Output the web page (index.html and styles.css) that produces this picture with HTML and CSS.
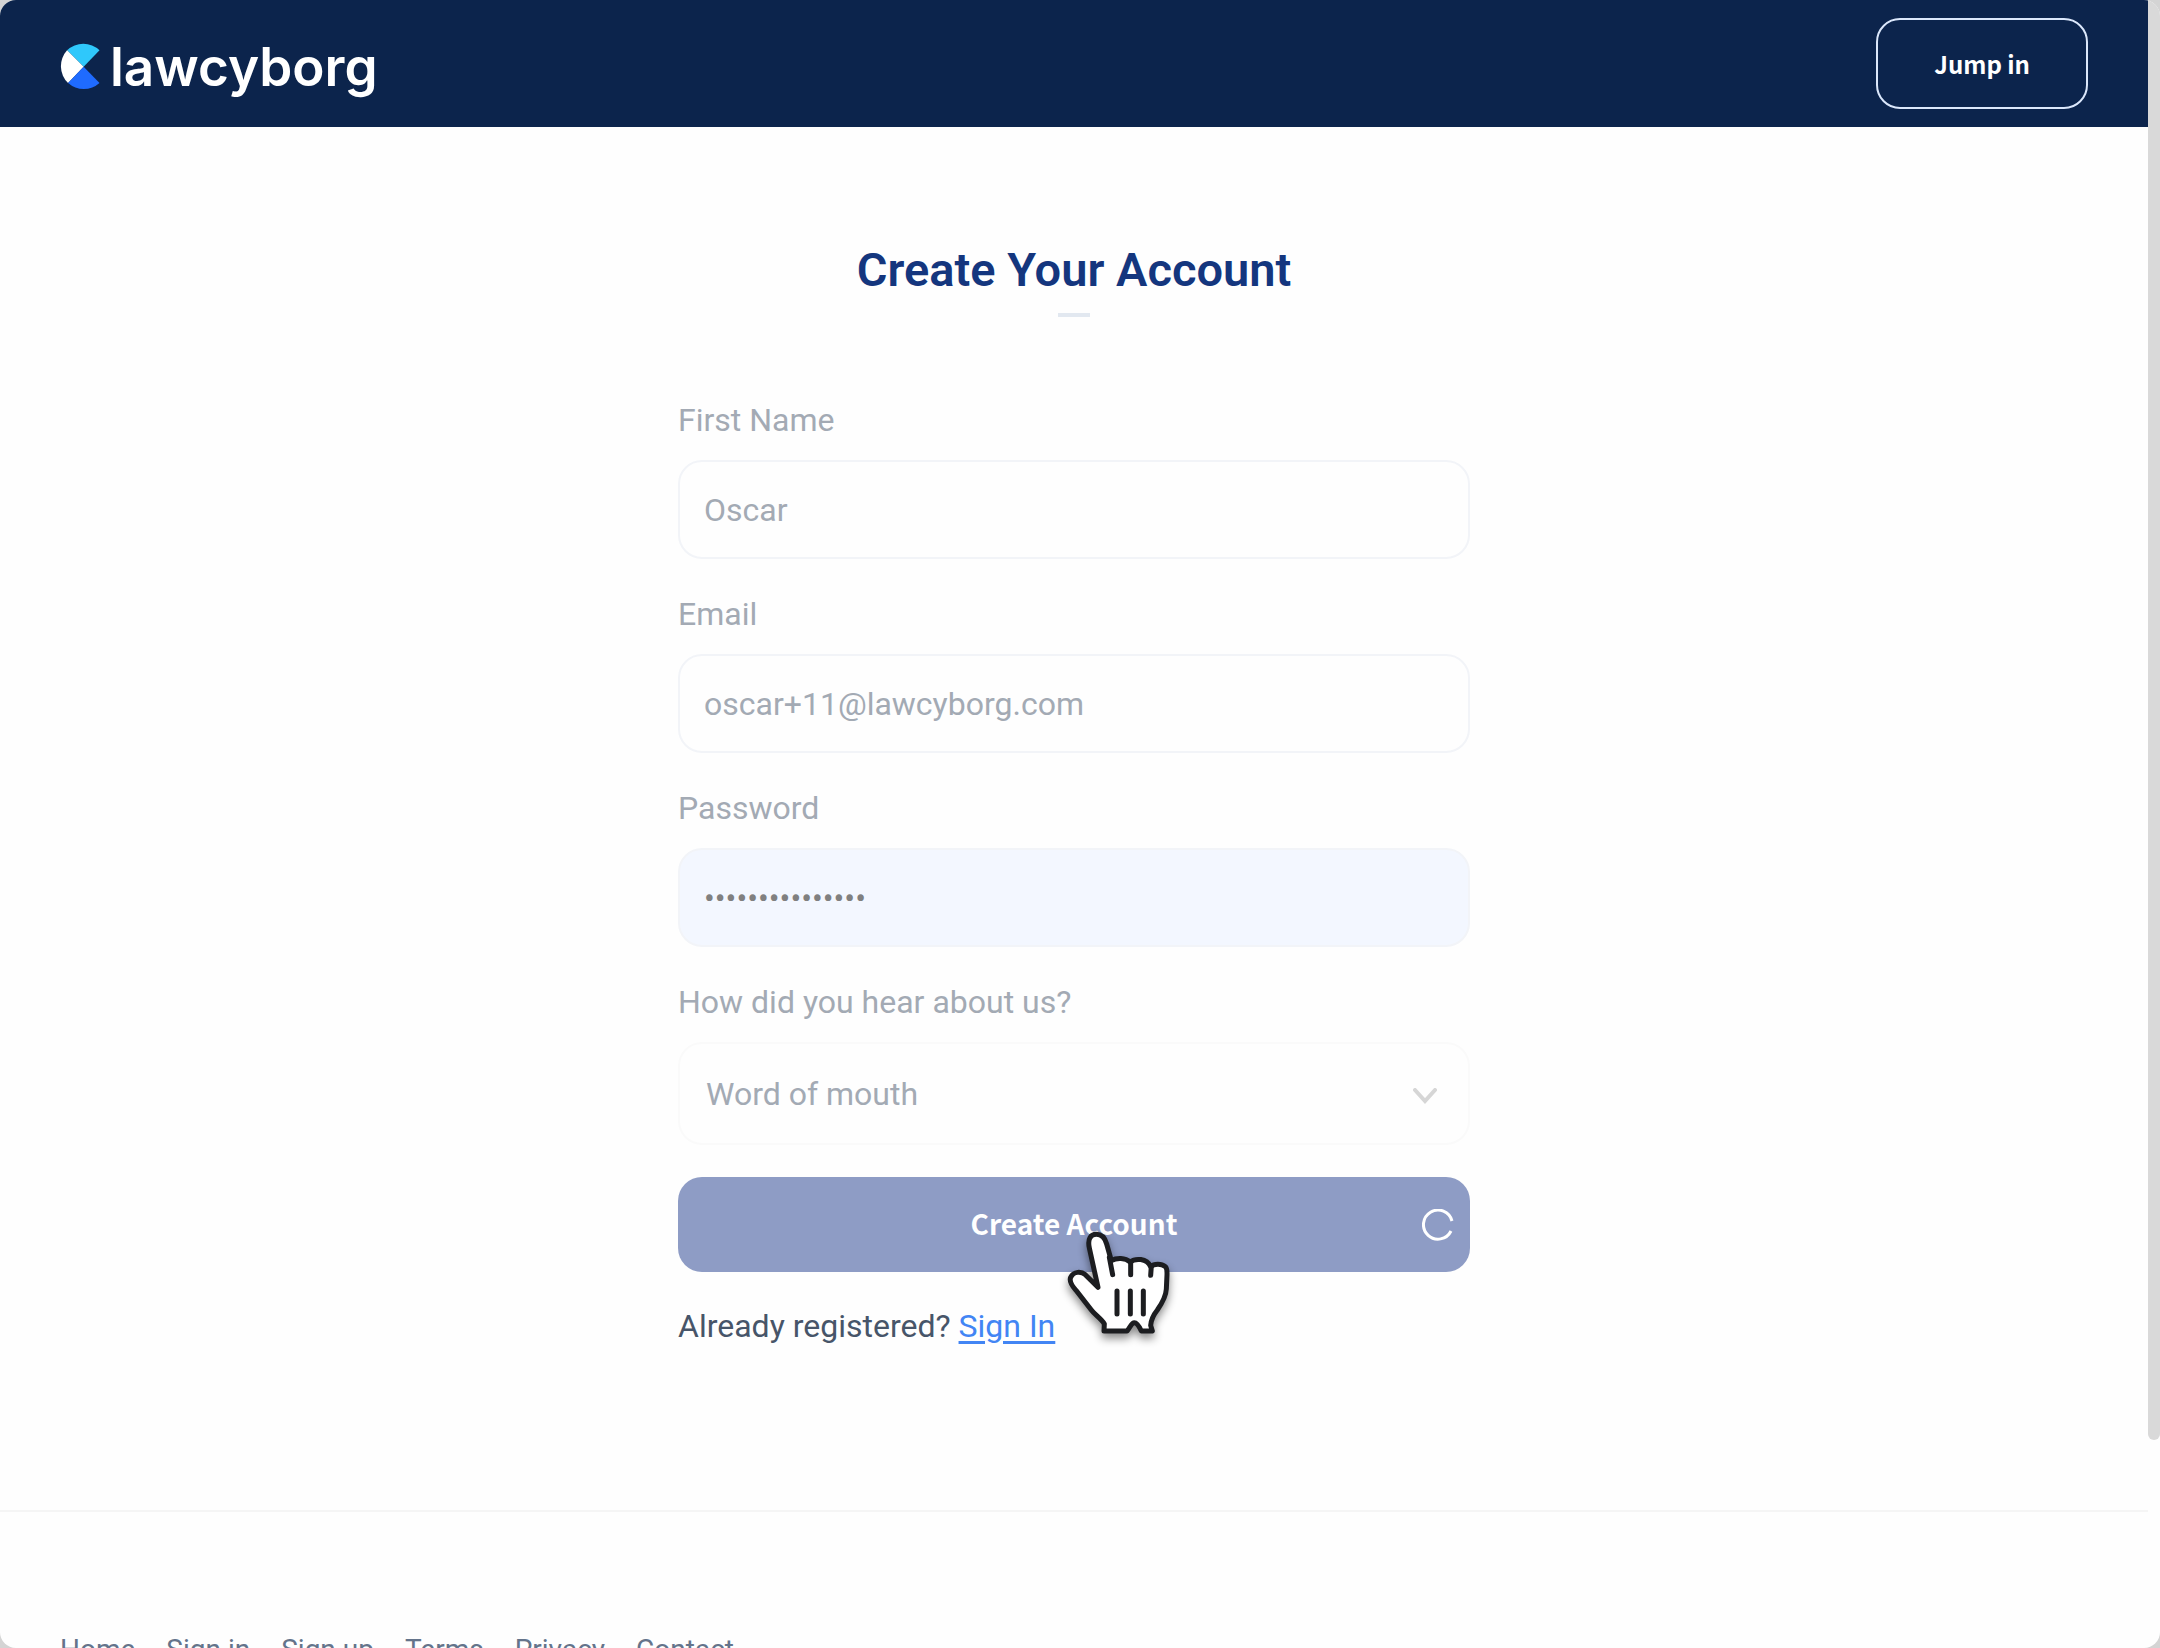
FILE: index.html
```html
<!DOCTYPE html>
<html lang="en">
<head>
    <meta charset="UTF-8">
    <meta name="viewport" content="width=device-width, initial-scale=1.0">
    <title>Create Your Account - lawcyborg</title>
    <link rel="stylesheet" href="styles.css">
</head>
<body>
    <div class="window">
        <div class="page">
            <header class="header">
                <a class="logo" href="#">
                    <svg class="logo-mark" viewBox="0 0 120 142" aria-hidden="true">
                        <path d="M71 72 L21 22 A71 71 0 0 1 119 22 Z" fill="#2fc8fb"/>
                        <path d="M71 72 L21 22 A71 71 0 0 0 24 121 Z" fill="#fff"/>
                        <path d="M71 72 L24 121 A71 71 0 0 0 119 121 Z" fill="#1f6bff"/>
                    </svg>
                    <span>lawcyborg</span>
                </a>
                <button class="jump-btn" type="button">Jump in</button>
            </header>

            <main class="main">
                <h1>Create Your Account</h1>
                <div class="title-bar"></div>

                <form class="signup">
                    <div class="field">
                        <label for="first-name">First Name</label>
                        <input id="first-name" type="text" value="Oscar">
                    </div>
                    <div class="field">
                        <label for="email">Email</label>
                        <input id="email" type="email" value="oscar+11@lawcyborg.com">
                    </div>
                    <div class="field">
                        <label for="password">Password</label>
                        <input id="password" class="autofilled" type="password" value="correcthorse123">
                    </div>
                    <div class="field">
                        <label for="source">How did you hear about us?</label>
                        <div class="select-wrap">
                            <select id="source">
                                <option selected>Word of mouth</option>
                                <option>Search engine</option>
                                <option>Social media</option>
                            </select>
                            <svg class="chevron" viewBox="0 0 24 16" aria-hidden="true">
                                <path d="M2 2 L12 13 L22 2"/>
                            </svg>
                        </div>
                    </div>
                    <div class="submit-row">
                        <button class="submit-btn" type="button">
                            Create Account
                            <svg class="spinner" viewBox="0 0 32 32" aria-hidden="true">
                                <path d="M30 12 A14.5 14.5 0 1 0 29 22"/>
                            </svg>
                        </button>
                        <!-- Hand pointer -->
                        <svg class="pointer" viewBox="375 205 330 345" aria-hidden="true">
                            <path class="hand" d="M474 380 L448 262 C442 234 452 221 469 221 C486 221 495 232 500 250 L514 300 C530 291 556 291 570 304 C586 292 620 292 632 318 C642 309 664 308 676 318 C682 323 681 332 681 342 L679 385 C678 405 666 428 652 448 C636 468 633 482 632 494 L637 511 L604 511 C599 500 592 486 583 486 C574 486 571 500 561 511 L492 511 L493 490 C485 475 466 464 454 448 L408 389 C398 378 386 364 392 350 C401 331 424 332 436 342 Z"/>
                            <path class="lines" d="M508 290 L518 342 M572 304 L572 342 M634 316 L632 344 M531 391 V460 M571 391 V460 M610 391 V460"/>
                        </svg>
                    </div>
                </form>
                <p class="signin">Already registered? <a href="#">Sign In</a></p>
            </main>

            <footer class="footer">
                <nav>
                    <a href="#">Home</a>
                    <a href="#">Sign in</a>
                    <a href="#">Sign up</a>
                    <a href="#">Terms</a>
                    <a href="#">Privacy</a>
                    <a href="#">Contact</a>
                </nav>
            </footer>
        </div>
        <div class="scrollbar"><div class="thumb"></div></div>
    </div>
</body>
</html>
```

FILE: styles.css
```css
* {
    box-sizing: border-box;
}
body {
    margin: 0;
    background: #d4d4d4;
    font-family: Roboto, sans-serif;
    font-size: 32px;
    line-height: 40px;
    color: #475569;
}
.window {
    display: flex;
    height: 100vh;
    overflow: hidden;
    border-radius: 16px;
    background: #fefefe;
}
.page {
    flex: 1;
    overflow: hidden;
}
.scrollbar {
    width: 12px;
}
.thumb {
    height: 87.4%;
    background: #d9d9d9;
    border-radius: 0 0 6px 6px;
}
.header {
    display: flex;
    align-items: center;
    justify-content: space-between;
    padding: 18px 60px;
    background: #0c244c;
}
.logo {
    display: flex;
    align-items: center;
    gap: 10px;
    padding-top: 6px;
    color: #fff;
    font-family: Inter, sans-serif;
    font-size: 53px;
    font-weight: 600;
    text-decoration: none;
}
.logo-mark {
    width: 40px;
    height: 47px;
}
.jump-btn {
    padding: 24px 56px;
    border: 2px solid #dbe7fb;
    border-radius: 24px;
    background: none;
    color: #fff;
    font-family: "Noto Sans CJK SC", sans-serif;
    font-size: 24px;
    font-weight: 700;
    line-height: 39px;
}
.main {
    display: flex;
    flex-direction: column;
    align-items: center;
    padding: 113px 24px 164px;
}
h1 {
    margin: 0 0 13px;
    color: #14367e;
    font-size: 47px;
    font-weight: 600;
    line-height: 60px;
}
.title-bar {
    width: 32px;
    height: 4px;
    margin-bottom: 83px;
    background: #e2e8f0;
}
.signup,
.signin {
    width: 100%;
    max-width: 792px;
}
.field {
    margin-bottom: 35px;
}
.field label {
    display: block;
    margin-bottom: 20px;
    color: #a3aab4;
}
.field input,
.field select {
    display: block;
    width: 100%;
    height: 99px;
    padding: 0 24px;
    border: 2px solid #f2f4f8;
    border-radius: 24px;
    background: #fefefe;
    color: #a3aab4;
    font: inherit;
}
.field .autofilled {
    background: #f3f7ff;
    color: #808080;
}
.select-wrap {
    position: relative;
}
.field select {
    height: 103px;
    padding: 0 26px;
    border-color: #fafafa;
    appearance: none;
}
.chevron {
    position: absolute;
    top: 46px;
    right: 33px;
    width: 24px;
    height: 16px;
    fill: none;
    stroke: #d6d6d6;
    stroke-width: 4;
    stroke-linecap: round;
}
.field:has(select) {
    margin-bottom: 32px;
}
.submit-row {
    position: relative;
}
.submit-btn {
    position: relative;
    display: block;
    width: 100%;
    height: 95px;
    padding: 0 0 4px;
    border: none;
    border-radius: 24px;
    background: #8e9cc5;
    color: #fff;
    font-family: "Noto Sans CJK SC", sans-serif;
    font-size: 28px;
    font-weight: 700;
}
.spinner {
    position: absolute;
    top: 32px;
    right: 16px;
    width: 32px;
    height: 32px;
    fill: none;
    stroke: #fff;
    stroke-width: 3;
}
.pointer {
    position: absolute;
    top: 52px;
    left: calc(50% - 9px);
    width: 110px;
    height: 115px;
    overflow: visible;
    filter: drop-shadow(0 5px 4px rgba(0, 0, 0, 0.45));
}
.hand {
    fill: #fff;
    stroke: #1c1d20;
    stroke-width: 15;
    stroke-linejoin: round;
}
.lines {
    fill: none;
    stroke: #1c1d20;
    stroke-width: 15;
    stroke-linecap: round;
}
.signin {
    margin: 34px 0 0;
}
.signin a {
    color: #4285f4;
    text-underline-offset: 4px;
}
.footer {
    padding: 118px 60px 60px;
    border-top: 2px solid #f5f5f5;
}
.footer nav {
    display: flex;
    gap: 31px;
}
.footer a {
    color: #64748b;
    font-size: 28px;
    text-decoration: none;
}
```
